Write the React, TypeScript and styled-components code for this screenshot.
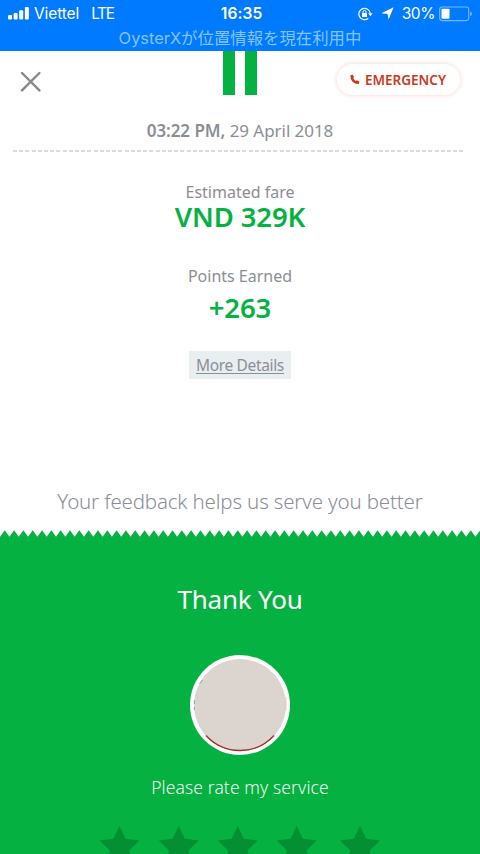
import React from "react";
import styled, { createGlobalStyle } from "styled-components";

const GREEN = "#05b140";
const GREY = "#8b8e97";

const GlobalStyle = createGlobalStyle`
  html, body { margin: 0; padding: 0; }
  body { background: #fff; overflow: hidden; }
  * { box-sizing: border-box; }
`;

const Screen = styled.div`
  width: 480px;
  height: 854px;
  overflow: hidden;
  display: flex;
  flex-direction: column;
  background: #fff;
  color: ${GREY};
  font-family: "Noto Sans", "Open Sans", sans-serif;
`;

const StatusArea = styled.header`
  flex: none;
  height: 51px;
  background: #007aff;
  color: #fff;
  font-family: Inter, "Noto Sans CJK JP", sans-serif;
`;

const StatusBar = styled.div`
  height: 27px;
  display: grid;
  grid-template-columns: 1fr auto 1fr;
  align-items: center;
  padding: 0 7px 0 8px;
  font-size: 15.5px;
  line-height: 27px;
`;

const StatusGroup = styled.div<{ $end?: boolean }>`
  display: flex;
  align-items: center;
  justify-content: ${(p) => (p.$end ? "flex-end" : "flex-start")};
`;

const Carrier = styled.span`
  margin: 0 12px 0 5px;
  letter-spacing: -0.1px;
`;

const Network = styled.span`
  font-size: 15.5px;
  letter-spacing: -1.4px;
`;

const Clock = styled.span`
  font-weight: 600;
  letter-spacing: 0.1px;
  padding-left: 2px;
`;

const Percent = styled.span`
  margin: 0 4px 0 8px;
  letter-spacing: -0.4px;
`;

const Spacer = styled.span`
  width: 8px;
`;

const LocationNotice = styled.div`
  height: 22px;
  text-align: center;
  color: #84c4ff;
  font-size: 16.4px;
  font-weight: 400;
  line-height: 22px;
  white-space: nowrap;
`;

const Receipt = styled.main`
  flex: none;
  height: 479px;
  display: flex;
  flex-direction: column;
  align-items: center;
`;

const TopBar = styled.div`
  width: 100%;
  height: 68px;
  display: grid;
  grid-template-columns: 1fr 34px 1fr;
  padding: 0 20px;
`;

const CloseButton = styled.button`
  width: 21px;
  height: 21px;
  margin: 20px 0 0;
  padding: 0;
  border: 0;
  background: none;
  display: flex;
`;

const RouteBars = styled.div`
  height: 44px;
  display: flex;
  justify-content: space-between;
`;

const RouteBar = styled.span`
  width: 12px;
  background: ${GREEN};
`;

const EmergencyButton = styled.button`
  justify-self: end;
  width: 123px;
  height: 31px;
  margin: 13px 0 0;
  padding: 0 1px 0 0;
  display: flex;
  align-items: center;
  justify-content: center;
  gap: 5px;
  border: 0;
  border-radius: 16px;
  background: #fff;
  box-shadow: 0 0 5px rgba(240, 90, 70, 0.28);
  color: #ca3a20;
  font: 600 13.5px "Noto Sans", sans-serif;
`;

const DateLine = styled.div`
  height: 31px;
  line-height: 24px;
  font-size: 17px;
  letter-spacing: -0.05px;
  white-space: nowrap;

  b {
    font-weight: 600;
  }
`;

const Divider = styled.div`
  width: 452px;
  height: 2px;
  margin-right: 2px;
  background: repeating-linear-gradient(90deg, #dadcdd 0 4px, transparent 4px 6.2px);
`;

const Stat = styled.section<{ $top: number }>`
  margin-top: ${(p) => p.$top}px;
  display: flex;
  flex-direction: column;
  align-items: center;
`;

const StatLabel = styled.span`
  height: 22px;
  line-height: 22px;
  font-size: 16px;
`;

const StatValue = styled.strong<{ $top?: number }>`
  height: 28px;
  margin-top: ${(p) => p.$top ?? 0}px;
  line-height: 28px;
  font-size: 27.5px;
  font-weight: 600;
  letter-spacing: -0.1px;
  color: ${GREEN};
`;

const DetailsButton = styled.button`
  width: 102px;
  height: 28px;
  margin-top: 29px;
  padding: 0;
  border: 0;
  display: flex;
  justify-content: center;
  background: #e9eef1;
  color: ${GREY};
  font: 15.5px/28px "Noto Sans", sans-serif;
  letter-spacing: -0.35px;
`;

const Underlined = styled.span`
  height: 23px;
  border-bottom: 1px solid ${GREY};
`;

const Feedback = styled.p`
  margin: 107px 0 0;
  line-height: 30px;
  font-size: 20.5px;
  font-weight: 300;
  letter-spacing: -0.16px;
  white-space: nowrap;
`;

const RatingPanel = styled.section`
  flex: 1;
  display: flex;
  flex-direction: column;
  align-items: center;
  background: ${GREEN};
  color: #fff;
`;

const Heading = styled.h1`
  margin: 44px 0 0;
  height: 36px;
  line-height: 36px;
  font-size: 26px;
  font-weight: 400;
  letter-spacing: -0.2px;
`;

const RatePrompt = styled.p`
  margin: 19px 0 0;
  height: 24px;
  line-height: 24px;
  font-size: 17.5px;
  font-weight: 300;
  letter-spacing: 0.1px;
  color: #effbf2;
`;

const StarRow = styled.div`
  width: 480px;
  height: 28px;
  margin-top: 27px;
  overflow: hidden;
`;

const Block = styled.svg`
  display: block;
  flex: none;
`;

const AvatarDrawing = styled(Block)`
  margin-top: 37px;
`;

const TOOTH = 9.32;
const zigzag = Array.from({ length: 53 }, (_, i) => {
  const x = (i - 0.5) * TOOTH + 0.1;
  return `${(x - TOOTH / 2).toFixed(2)},6.8 ${x.toFixed(2)},0.3`;
}).join(" ");

const starPoints = (cx: number, cy: number, r: number) =>
  Array.from({ length: 10 }, (_, i) => {
    const radius = i % 2 ? r * 0.49 : r;
    const a = (Math.PI / 5) * i;
    return `${(cx + radius * Math.sin(a)).toFixed(2)},${(cy - radius * Math.cos(a)).toFixed(2)}`;
  }).join(" ");

const STAR_CENTERS = [119.5, 178.7, 237.7, 296.7, 360];

const SignalIcon = () => (
  <Block width="21" height="13" viewBox="0 0 21 13" fill="#fff">
    <rect x="0" y="8" width="4" height="4.5" rx="1" />
    <rect x="5.6" y="6" width="4" height="6.5" rx="1" />
    <rect x="11.2" y="3.3" width="4" height="9.2" rx="1" />
    <rect x="16.9" y="0" width="4" height="12.5" rx="1" />
  </Block>
);

const RotationLockIcon = () => (
  <Block width="15" height="14" viewBox="0 0 15 14" fill="none" stroke="#fff">
    <path d="M12.2 6.2A5.7 5.7 0 1 0 10.3 11.3" strokeWidth="1.2" />
    <path d="M10.2 6.2h4.4l-2.2 3z" fill="#fff" stroke="none" />
    <rect x="4" y="6.1" width="5" height="4" rx="0.5" fill="#fff" stroke="none" />
    <path d="M5 6.3V5a1.5 1.5 0 0 1 3 0v1.3" strokeWidth="1" />
  </Block>
);

const LocationIcon = () => (
  <Block width="13" height="13" viewBox="0 0 13 13" fill="#fff">
    <path d="M12.6 0.3L7.6 12.6L6.5 6.9L0.3 6.2z" />
  </Block>
);

const BatteryIcon = () => (
  <Block width="34" height="16" viewBox="0 0 34 16">
    <rect x="0.7" y="1" width="29" height="13.6" rx="2.6" fill="none" stroke="#76b8ff" strokeWidth="1.1" />
    <rect x="2.5" y="2.8" width="8" height="10" rx="0.8" fill="#fff" />
    <path d="M31.3 5.5c2 .8 2 3.8 0 4.6z" fill="#8cc4ff" />
  </Block>
);

const CloseIcon = () => (
  <Block width="21" height="21" viewBox="0 0 21 21" stroke="#858891" strokeWidth="2.4" strokeLinecap="round">
    <path d="M2 2L19.4 19.4M19.4 2L2 19.4" />
  </Block>
);

const PhoneIcon = () => (
  <Block width="10" height="11" viewBox="0 0 10 11" fill="#ca3a20">
    <path d="M1 1.1L2.5 0.8Q3 0.8 3.2 1.3L3.9 3.2Q4 3.6 3.6 3.9L3.2 4.3Q4.1 6 5.8 6.9L6.3 6.5Q6.6 6.2 7 6.4L9 7.2Q9.5 7.4 9.4 7.9L9.1 9.3Q9 9.9 8.3 9.9Q4.7 9.9 2.3 7.4Q0.3 4.9 0.4 1.8Q0.4 1.2 1 1.1Z" />
  </Block>
);

const TornEdge = () => (
  <Block width="480" height="7" viewBox="0 0 480 7">
    <polygon points={`-12,7 ${zigzag} 490,7`} fill={GREEN} />
  </Block>
);

const Avatar = () => (
  <AvatarDrawing width="102" height="102" viewBox="0 0 102 102">
    <circle cx="51" cy="51" r="50" fill="#fff" />
    <circle cx="51" cy="51" r="46" fill="#dcd4cf" />
    <path d="M17 81.5A46 46 0 0 0 85 81.5" fill="none" stroke="#a92a2c" strokeWidth="1.3" />
    <path d="M5.4 46v4M5.4 53v3M10.5 30l3-4" fill="none" stroke="#4bab90" strokeWidth="0.8" />
    <path d="M97 43v13" stroke="#d9bfa0" strokeWidth="0.7" />
  </AvatarDrawing>
);

export default function App() {
  return (
    <>
      <GlobalStyle />
      <Screen>
        <StatusArea>
          <StatusBar>
            <StatusGroup>
              <SignalIcon />
              <Carrier>Viettel</Carrier>
              <Network>LTE</Network>
            </StatusGroup>
            <Clock>16:35</Clock>
            <StatusGroup $end>
              <RotationLockIcon />
              <Spacer />
              <LocationIcon />
              <Percent>30%</Percent>
              <BatteryIcon />
            </StatusGroup>
          </StatusBar>
          <LocationNotice>OysterXが位置情報を現在利用中</LocationNotice>
        </StatusArea>
        <Receipt>
          <TopBar>
            <CloseButton aria-label="Close">
              <CloseIcon />
            </CloseButton>
            <RouteBars>
              <RouteBar />
              <RouteBar />
            </RouteBars>
            <EmergencyButton>
              <PhoneIcon />
              <span>EMERGENCY</span>
            </EmergencyButton>
          </TopBar>
          <DateLine>
            <b>03:22 PM,</b> 29 April 2018
          </DateLine>
          <Divider />
          <Stat $top={29}>
            <StatLabel>Estimated fare</StatLabel>
            <StatValue>VND 329K</StatValue>
          </Stat>
          <Stat $top={34}>
            <StatLabel>Points Earned</StatLabel>
            <StatValue $top={7}>+263</StatValue>
          </Stat>
          <DetailsButton>
            <Underlined>More Details</Underlined>
          </DetailsButton>
          <Feedback>Your feedback helps us serve you better</Feedback>
        </Receipt>
        <TornEdge />
        <RatingPanel>
          <Heading>Thank You</Heading>
          <Avatar />
          <RatePrompt>Please rate my service</RatePrompt>
          <StarRow>
            <Block width="480" height="28" viewBox="0 826 480 28">
              {STAR_CENTERS.map((cx) => (
                <polygon key={cx} points={starPoints(cx, 847, 21)} fill="#048f32" />
              ))}
            </Block>
          </StarRow>
        </RatingPanel>
      </Screen>
    </>
  );
}
